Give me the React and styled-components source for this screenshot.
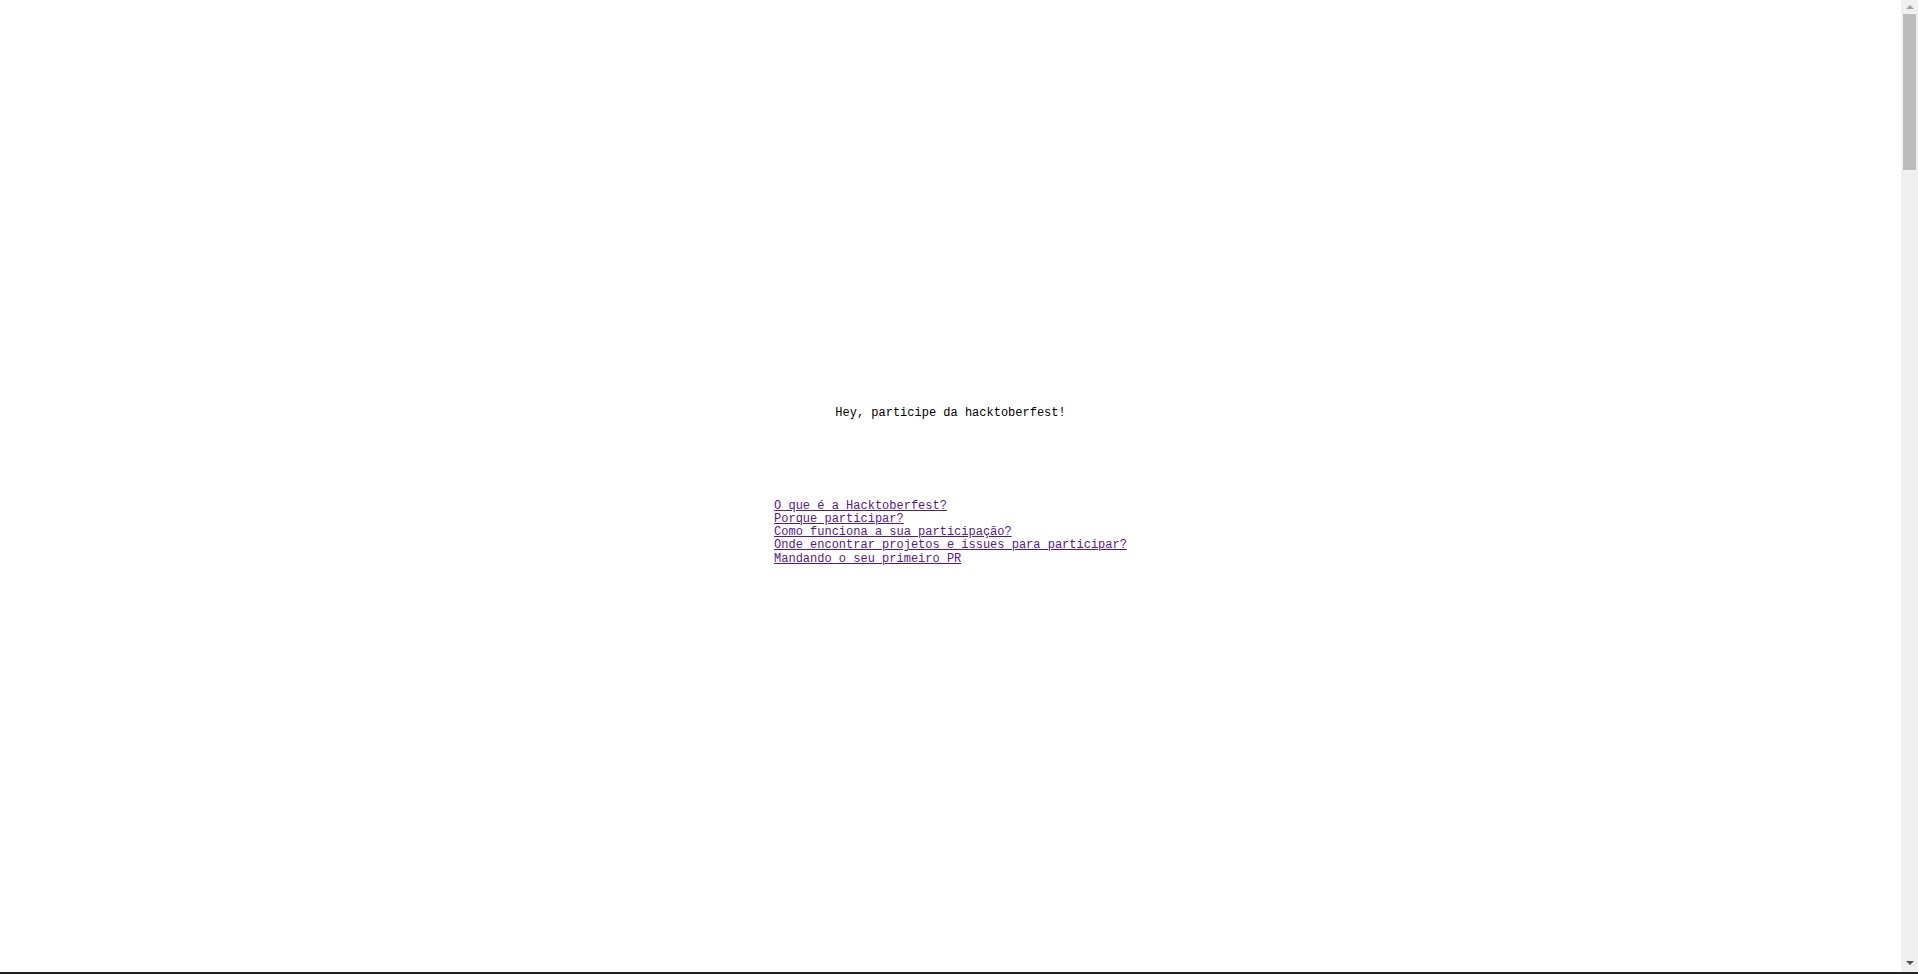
import React from 'react';
import styled, { createGlobalStyle } from 'styled-components';

const GlobalStyle = createGlobalStyle`
    html, body {
        margin: 0;
        padding: 0;
        background: #ffffff;
    }
    body {
        font-family: 'Liberation Mono', 'DejaVu Sans Mono', monospace;
        font-size: 12px;
        color: #000000;
    }
`;

const Page = styled.div`
    display: flex;
    flex-direction: column;
    align-items: center;
    min-height: 5900px;
    padding-right: 17px;
`;

const Header = styled.header`
    padding-top: 406px;
`;

const Title = styled.h1`
    margin: 0;
    font-size: 12px;
    font-weight: normal;
    line-height: 15px;
`;

const Nav = styled.nav`
    margin-top: 79px;
`;

const LinkList = styled.ul`
    list-style: none;
    margin: 0;
    padding: 0;
`;

const LinkItem = styled.li`
    line-height: 13.15px;
`;

const Link = styled.a`
    color: #551a8b;
    text-decoration: underline;
`;

// imitation of the window's scrollbar
const ScrollTrack = styled.div`
    position: fixed;
    top: 0;
    right: 0;
    bottom: 0;
    width: 17px;
    background: #f0f0f0;
    display: flex;
    flex-direction: column;
    align-items: center;
`;

const Arrow = styled.div`
    width: 0;
    height: 0;
    margin: ${(p) => (p.down ? 'auto 0 9px' : '5px 0 0')};
    border-left: 4px solid transparent;
    border-right: 4px solid transparent;
    ${(p) =>
        p.down
            ? 'border-top: 4px solid #505050;'
            : 'border-bottom: 4px solid #a3a3a3;'}
`;

const Thumb = styled.div`
    width: 13px;
    height: 156px;
    margin-top: 5px;
    background: #bcbcbc;
`;

const BottomEdge = styled.div`
    position: fixed;
    left: 0;
    right: 0;
    bottom: 0;
    height: 2px;
    background: #222222;
    z-index: 2;
`;

const links = [
    { id: 'o-que-e', label: 'O que é a Hacktoberfest?' },
    { id: 'porque', label: 'Porque participar?' },
    { id: 'como-funciona', label: 'Como funciona a sua participação?' },
    { id: 'onde-encontrar', label: 'Onde encontrar projetos e issues para participar?' },
    { id: 'primeiro-pr', label: 'Mandando o seu primeiro PR' },
];

export default function App() {
    return (
        <>
            <GlobalStyle />
            <Page>
                <Header>
                    <Title>Hey, participe da hacktoberfest!</Title>
                </Header>
                <Nav>
                    <LinkList>
                        {links.map((link) => (
                            <LinkItem key={link.id}>
                                <Link href={`#${link.id}`}>{link.label}</Link>
                            </LinkItem>
                        ))}
                    </LinkList>
                </Nav>
            </Page>
            <ScrollTrack>
                <Arrow />
                <Thumb />
                <Arrow down />
            </ScrollTrack>
            <BottomEdge />
        </>
    );
}
